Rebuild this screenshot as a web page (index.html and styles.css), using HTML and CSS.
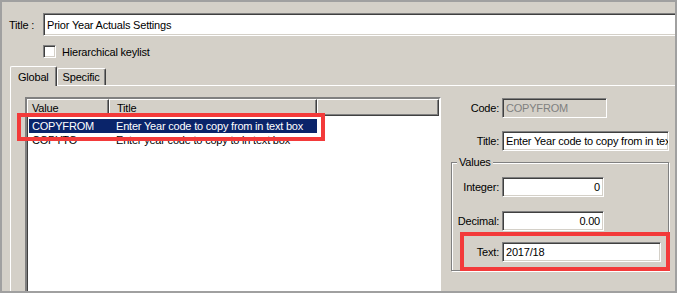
FILE: index.html
```html
<!DOCTYPE html>
<html lang="en">

<head>
    <meta charset="UTF-8">
    <title>Prior Year Actuals Settings</title>
    <link rel="stylesheet" href="styles.css">
</head>

<body>
    <div class="window">
        <div class="title-row">
            <span class="title-label">Title :</span>
            <div class="field title-field">Prior Year Actuals Settings</div>
        </div>

        <div class="check-row">
            <span class="checkbox"></span>
            <span>Hierarchical keylist</span>
        </div>

        <div class="tabs">
            <div class="tab active">Global</div>
            <div class="tab">Specific</div>
        </div>

        <div class="tab-panel">
            <div class="listview">
                <div class="list-head">
                    <div class="head-cell head-value">Value</div>
                    <div class="head-cell head-title">Title</div>
                    <div class="head-cell head-rest"></div>
                </div>
                <div class="list-body">
                    <div class="list-row selected">
                        <span class="col-value">COPYFROM</span>
                        <span class="col-title">Enter Year code to copy from in text box</span>
                    </div>
                    <div class="list-row">
                        <span class="col-value">COPYTO</span>
                        <span class="col-title">Enter year code to copy to in text box</span>
                    </div>
                </div>
            </div>

            <div class="detail">
                <div class="detail-row code-row">
                    <span class="detail-label">Code:</span>
                    <div class="field code-field disabled">COPYFROM</div>
                </div>
                <div class="detail-row name-row">
                    <span class="detail-label">Title:</span>
                    <div class="field name-field">Enter Year code to copy from in text box</div>
                </div>

                <div class="group">
                    <span class="legend">Values</span>
                    <div class="detail-row int-row">
                        <span class="group-label">Integer:</span>
                        <div class="field num-field">0</div>
                    </div>
                    <div class="detail-row dec-row">
                        <span class="group-label">Decimal:</span>
                        <div class="field num-field">0.00</div>
                    </div>
                    <div class="detail-row text-row">
                        <span class="group-label">Text:</span>
                        <div class="field text-field">2017/18</div>
                    </div>
                </div>
            </div>
        </div>

        <!-- red annotation boxes -->
        <div class="callout callout-row"></div>
        <div class="callout callout-text"></div>
    </div>
</body>

</html>
```

FILE: styles.css
```css
* {
    box-sizing: border-box;
}

body {
    margin: 0;
    font-family: "Liberation Sans", Arial, sans-serif;
    font-size: 11px;
    letter-spacing: -0.2px;
    color: #000;
}

.window {
    position: relative;
    width: 677px;
    height: 293px;
    border: 2px solid #a0a0a0;
    background: #d4d0c8;
    overflow: hidden;
}

/* sunken edit box */
.field {
    display: flex;
    align-items: center;
    height: 20px;
    padding: 0 3px;
    background: #fff;
    border: 1px solid;
    border-color: #808080 #fff #fff #808080;
    box-shadow: inset 1px 1px #404040, inset -1px -1px #d4d0c8;
    white-space: nowrap;
    overflow: hidden;
}

.field.disabled {
    background: #d4d0c8;
    color: #808080;
}

.title-row {
    display: flex;
    align-items: center;
    padding: 11px 0 0 7px;
}

.title-label {
    width: 34px;
}

.title-field {
    flex: 1;
    height: 23px;
    margin-right: -6px;
}

.check-row {
    display: flex;
    align-items: center;
    gap: 6px;
    margin-top: 9px;
    padding-left: 41px;
    height: 13px;
}

.checkbox {
    width: 13px;
    height: 13px;
    background: #fff;
    border: 1px solid;
    border-color: #808080 #fff #fff #808080;
    box-shadow: inset 1px 1px #404040, inset -1px -1px #d4d0c8;
}

.tabs {
    display: flex;
    align-items: flex-end;
    height: 19px;
    margin: 8px 0 0 8px;
}

.tab {
    display: flex;
    align-items: center;
    height: 17px;
    padding: 0 5px;
    border: 1px solid;
    border-color: #fff #404040 transparent #fff;
    border-bottom: none;
    border-radius: 2px 2px 0 0;
    box-shadow: inset -1px 0 #808080;
}

.tab.active {
    position: relative;
    z-index: 1;
    height: 20px;
    margin-bottom: -1px;
    padding: 0 7px;
    background: #d4d0c8;
}

.tab-panel {
    display: flex;
    height: 300px;
    margin-left: 8px;
    padding: 11px 0 0 14px;
    border-top: 1px solid #fff;
    border-left: 1px solid #fff;
}

.listview {
    width: 416px;
    height: 200px;
    flex-shrink: 0;
    background: #fff;
    border: 2px solid;
    border-color: #808080 #fff #fff #808080;
    box-shadow: inset 1px 1px #404040;
}

.list-head {
    display: flex;
    height: 17px;
}

.head-cell {
    display: flex;
    align-items: center;
    background: #d4d0c8;
    border: 1px solid;
    border-color: #fff #404040 #404040 #fff;
    box-shadow: inset -1px -1px #808080;
}

.head-value {
    width: 82px;
    padding-left: 4px;
}

.head-title {
    width: 208px;
    padding-left: 7px;
}

.head-rest {
    flex: 1;
}

.list-body {
    padding-top: 3px;
}

.list-row {
    display: flex;
    align-items: center;
    width: 288px;
    height: 14px;
    margin-left: 2px;
}

.list-row.selected {
    background: #0a246a;
    color: #fff;
}

.col-value {
    width: 84px;
    padding-left: 3px;
}

.col-title {
    padding-left: 3px;
}

.detail {
    display: flex;
    flex-direction: column;
    width: 240px;
}

.detail-row {
    display: flex;
    align-items: center;
}

.detail-label {
    width: 58px;
    margin-right: 3px;
    text-align: right;
}

.code-row {
    margin-top: 1px;
}

.code-field {
    width: 105px;
}

.name-row {
    margin-top: 13px;
}

.name-field {
    width: 167px;
}

/* etched group box */
.group {
    width: 218px;
    height: 109px;
    margin: 11px 0 0 10px;
    border: 1px solid #808080;
    box-shadow: inset 1px 1px #fff, 1px 1px #fff;
}

.legend {
    display: table;
    margin: -7px 0 0 5px;
    padding: 0 2px;
    line-height: 13px;
    background: #d4d0c8;
}

.group-label {
    width: 47px;
    margin-right: 3px;
    text-align: right;
}

.int-row {
    margin-top: 8px;
}

.dec-row {
    margin-top: 14px;
}

.text-row {
    margin-top: 11px;
}

.num-field {
    width: 102px;
    justify-content: flex-end;
}

.text-field {
    width: 159px;
}

.callout {
    position: absolute;
    border: 4px solid #f33a3a;
}

.callout-row {
    left: 15px;
    top: 111px;
    width: 308px;
    height: 28px;
}

.callout-text {
    left: 458px;
    top: 230px;
    width: 210px;
    height: 39px;
}
```
